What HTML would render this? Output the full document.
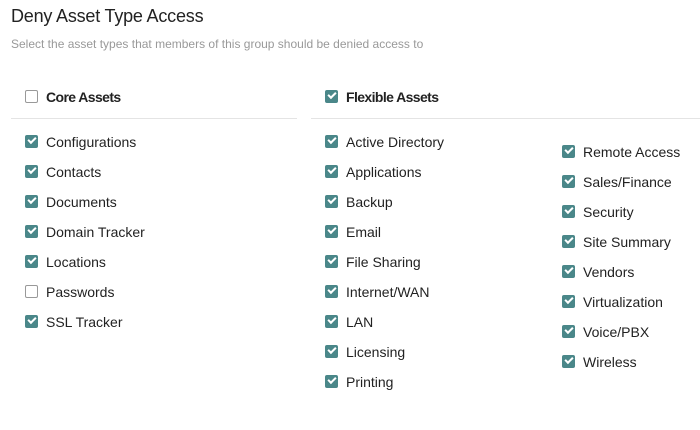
<!DOCTYPE html><html><head><style>
body{margin:0;width:700px;height:430px;background:#fff;font-family:"Liberation Sans",sans-serif;position:relative;overflow:hidden;color:#222}
.a{position:absolute;white-space:nowrap}
.t{left:11px;top:6px;font-size:18px;color:#222;letter-spacing:-0.2px}
.s{left:11px;top:37px;font-size:12px;color:#999}
.i{position:absolute;font-size:14px;height:16px;line-height:16px}
.i b{font-weight:bold;letter-spacing:-0.6px}
.cb{position:absolute;left:-21px;top:1px;width:13px;height:13px;border-radius:2px;background:#4a8789}
.cb::after{content:"";position:absolute;left:3px;top:2px;width:6px;height:3px;border-left:2px solid #fff;border-bottom:2px solid #fff;transform:rotate(-45deg)}
.cb.u{background:#fff;border:1px solid #999;width:11px;height:11px}
.cb.u::after{display:none}
.hr{position:absolute;height:1px;background:#e4e4e4;top:118px}
</style></head><body>
<div class="a t">Deny Asset Type Access</div>
<div class="a s">Select the asset types that members of this group should be denied access to</div>
<div class="hr" style="left:11px;width:286px"></div>
<div class="hr" style="left:311px;width:389px"></div>
<div class="i" style="left:46px;top:89px"><span class="cb u"></span><b>Core Assets</b></div>
<div class="i" style="left:346px;top:89px"><span class="cb"></span><b>Flexible Assets</b></div>
<div class="i" style="left:46px;top:134px"><span class="cb"></span>Configurations</div>
<div class="i" style="left:46px;top:164px"><span class="cb"></span>Contacts</div>
<div class="i" style="left:46px;top:194px"><span class="cb"></span>Documents</div>
<div class="i" style="left:46px;top:224px"><span class="cb"></span>Domain Tracker</div>
<div class="i" style="left:46px;top:254px"><span class="cb"></span>Locations</div>
<div class="i" style="left:46px;top:284px"><span class="cb u"></span>Passwords</div>
<div class="i" style="left:46px;top:314px"><span class="cb"></span>SSL Tracker</div>
<div class="i" style="left:346px;top:134px"><span class="cb"></span>Active Directory</div>
<div class="i" style="left:346px;top:164px"><span class="cb"></span>Applications</div>
<div class="i" style="left:346px;top:194px"><span class="cb"></span>Backup</div>
<div class="i" style="left:346px;top:224px"><span class="cb"></span>Email</div>
<div class="i" style="left:346px;top:254px"><span class="cb"></span>File Sharing</div>
<div class="i" style="left:346px;top:284px"><span class="cb"></span>Internet/WAN</div>
<div class="i" style="left:346px;top:314px"><span class="cb"></span>LAN</div>
<div class="i" style="left:346px;top:344px"><span class="cb"></span>Licensing</div>
<div class="i" style="left:346px;top:374px"><span class="cb"></span>Printing</div>
<div class="i" style="left:583px;top:144px"><span class="cb"></span>Remote Access</div>
<div class="i" style="left:583px;top:174px"><span class="cb"></span>Sales/Finance</div>
<div class="i" style="left:583px;top:204px"><span class="cb"></span>Security</div>
<div class="i" style="left:583px;top:234px"><span class="cb"></span>Site Summary</div>
<div class="i" style="left:583px;top:264px"><span class="cb"></span>Vendors</div>
<div class="i" style="left:583px;top:294px"><span class="cb"></span>Virtualization</div>
<div class="i" style="left:583px;top:324px"><span class="cb"></span>Voice/PBX</div>
<div class="i" style="left:583px;top:354px"><span class="cb"></span>Wireless</div>
</body></html>
